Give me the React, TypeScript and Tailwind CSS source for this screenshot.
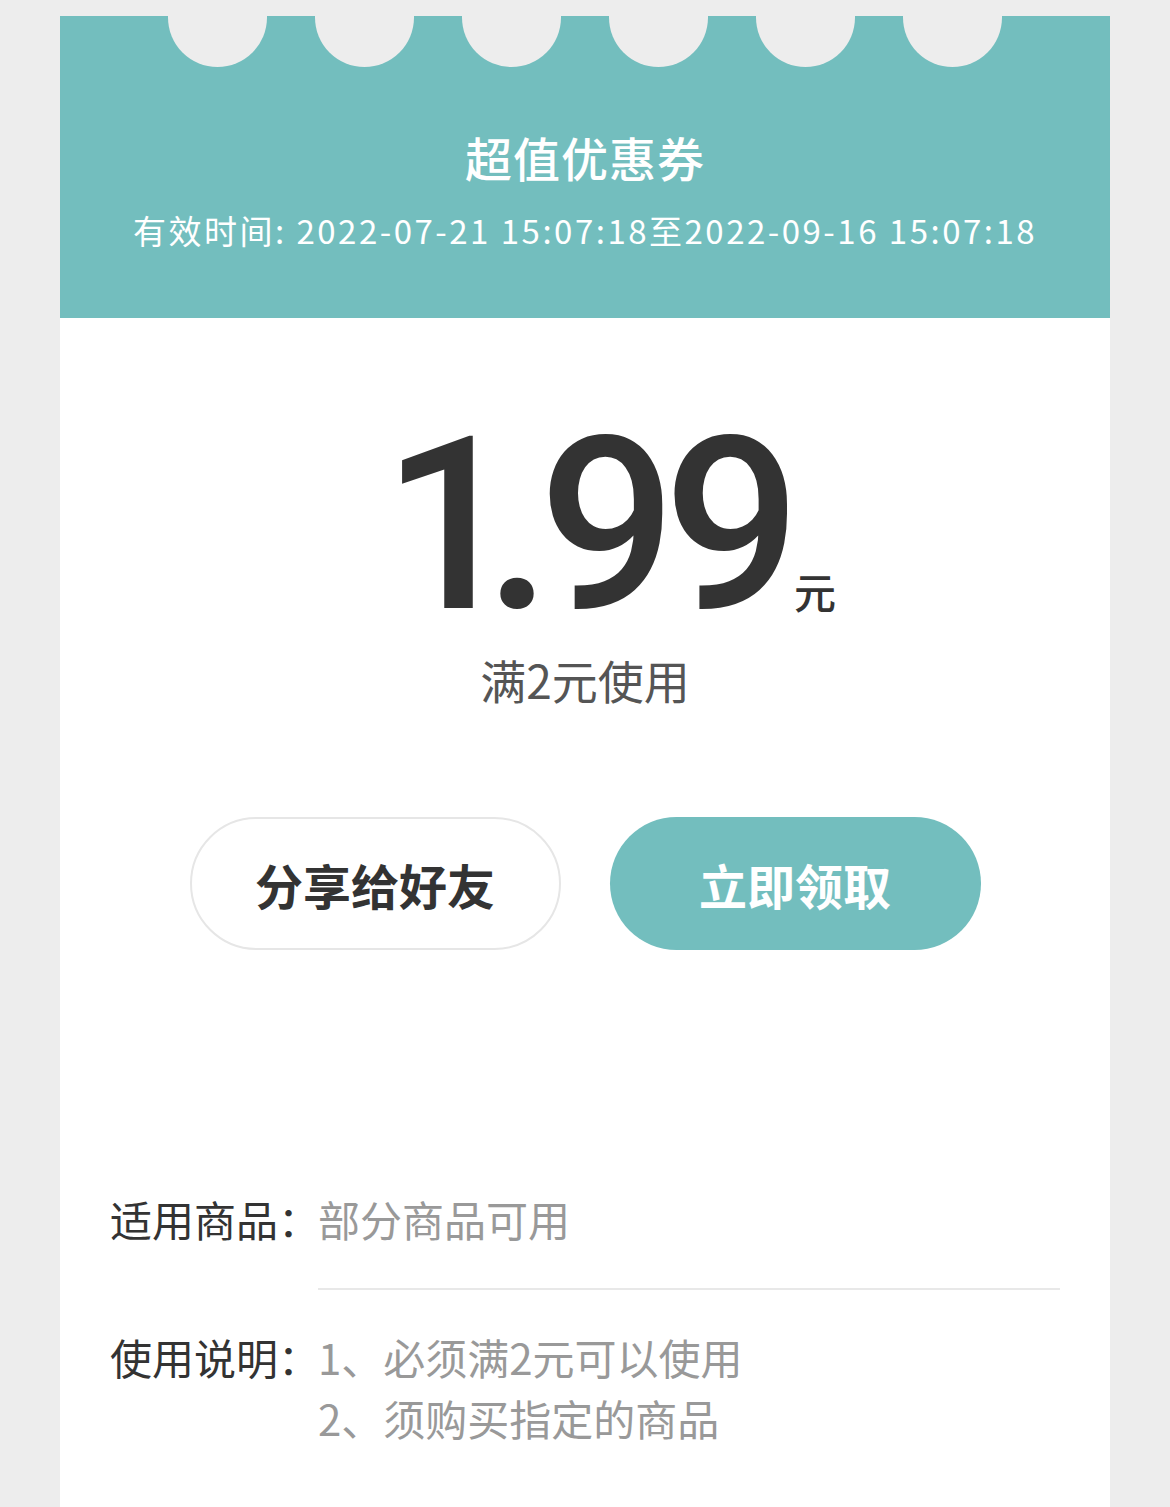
import React from "react";

const CJK = "font-['PingFang_SC','Noto_Sans_CJK_SC',sans-serif]";

const scallops = [217, 364, 511, 658, 805, 952];

export default function App() {
  return (
    <div className={`min-h-[1507px] bg-[#ededed] pt-4 ${CJK}`}>
      <div className="mx-[60px] min-h-[1491px] bg-white">
        {/* Header */}
        <div className="relative h-[302px] overflow-hidden bg-[#73bebe] text-white">
          {scallops.map((x) => (
            <div
              key={x}
              className="absolute top-[-48px] h-[99px] w-[99px] rounded-full bg-[#ededed]"
              style={{ left: x - 60 - 49.5 }}
            />
          ))}
          <div className="flex flex-col items-center pt-[111px]">
            <h1 className="text-[47px] font-medium leading-[60px] tracking-[1px]">超值优惠券</h1>
            <p className="mt-[21px] text-[33px] leading-[44px] tracking-[2.5px]">
              有效时间: 2022-07-21 15:07:18至2022-09-16 15:07:18
            </p>
          </div>
        </div>

        {/* Amount */}
        <div className="flex flex-col items-center pt-[98px]">
          <div className="relative flex items-baseline text-[#333333]">
            <span className="font-['Roboto',sans-serif] text-[242px] font-medium leading-[218px] tracking-[-13px]">
              <span className="mr-[-22px]">1</span>.99
            </span>
            <span className="absolute bottom-[18px] left-full ml-[6px] whitespace-nowrap text-[42px] font-medium leading-[50px]">
              元
            </span>
          </div>
          <p className="mt-[17px] text-[46px] leading-[56px] text-[#555555]">满2元使用</p>
        </div>

        {/* Buttons */}
        <div className="mt-[110px] flex justify-center gap-[49px]">
          <button className="flex h-[133px] w-[371px] items-center justify-center rounded-full border-2 border-[#e6e6e6] bg-white text-[48px] font-semibold text-[#333333]">
            分享给好友
          </button>
          <button className="flex h-[133px] w-[371px] items-center justify-center rounded-full bg-[#73bebe] text-[48px] font-semibold text-white">
            立即领取
          </button>
        </div>

        {/* Details */}
        <div className="mt-[238px] px-[50px] text-[42px] leading-[61px]">
          <div className="flex">
            <span className="w-[208px] shrink-0 whitespace-nowrap text-[#333333]">适用商品：</span>
            <span className="text-[#999999]">部分商品可用</span>
          </div>
          <div className="ml-[208px] mt-[39px] h-[2px] bg-[#e8e8e8]" />
          <div className="mt-[36px] flex">
            <span className="w-[208px] shrink-0 whitespace-nowrap text-[#333333]">使用说明：</span>
            <div className="text-[#999999]">
              <p>1、必须满2元可以使用</p>
              <p>2、须购买指定的商品</p>
            </div>
          </div>
        </div>
      </div>
    </div>
  );
}
